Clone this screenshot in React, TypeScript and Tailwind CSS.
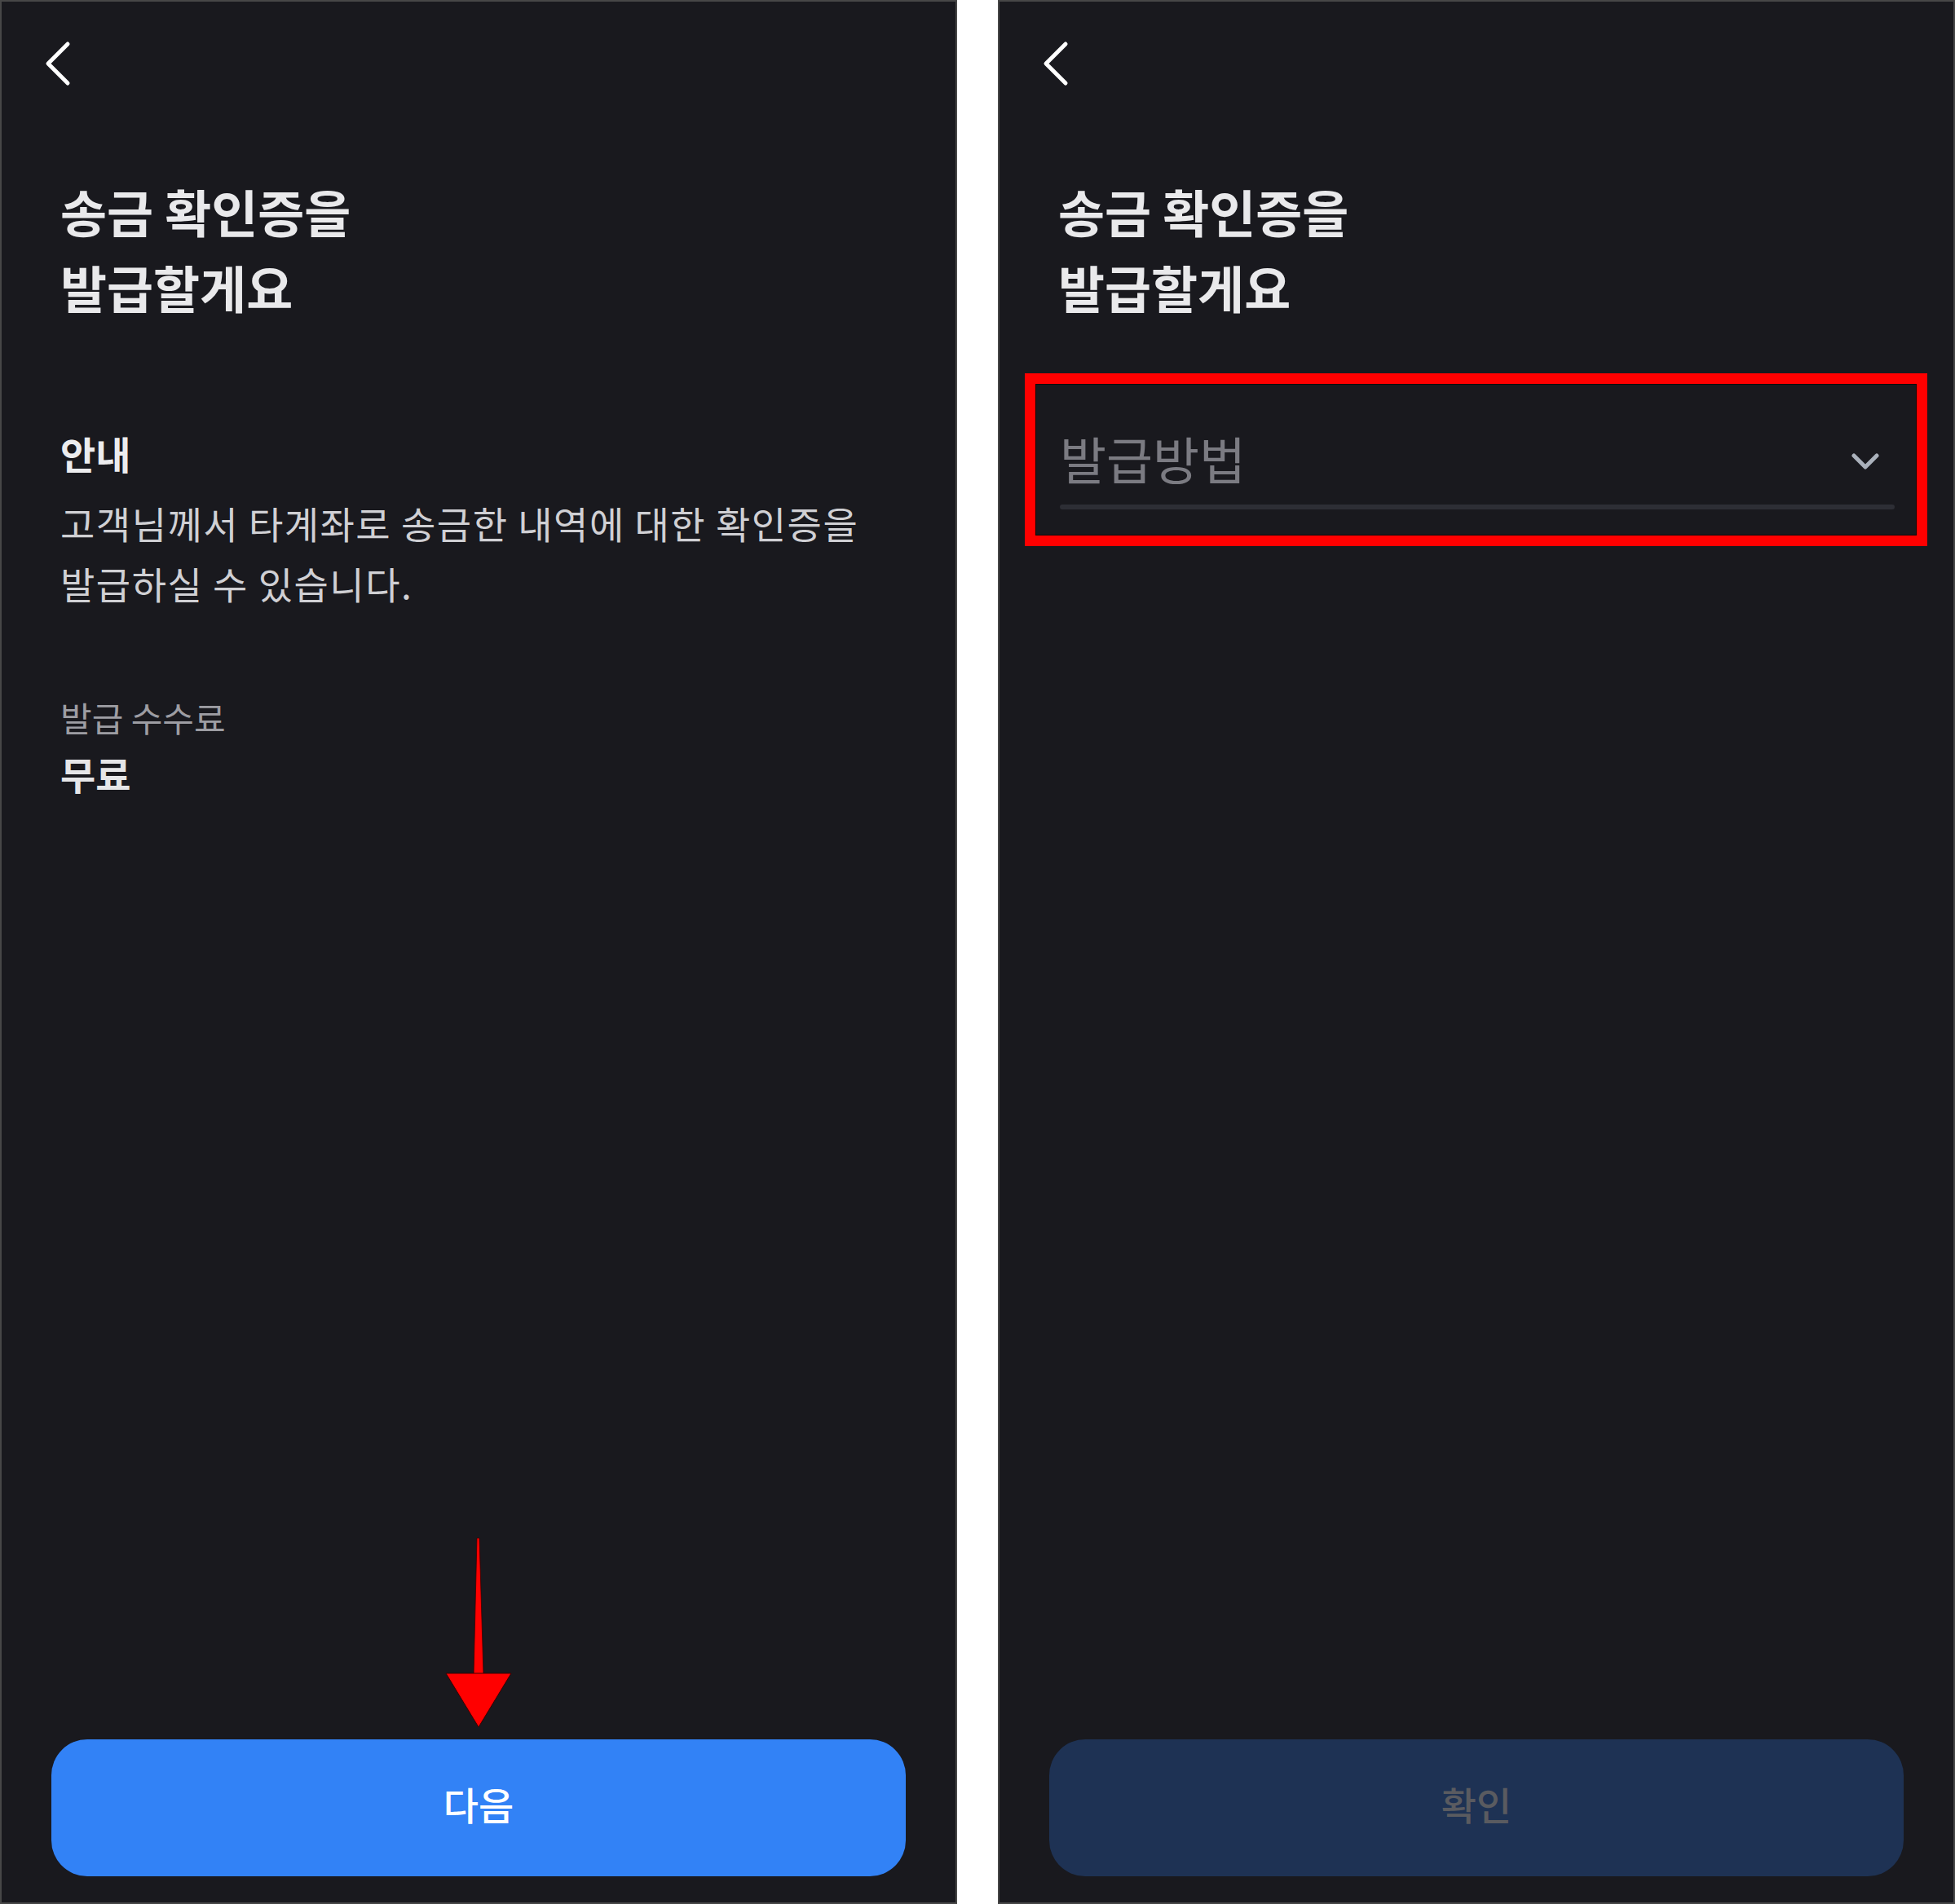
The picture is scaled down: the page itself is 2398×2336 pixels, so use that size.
import React from 'react';

const FONT = "font-['Noto_Sans_CJK_KR','Noto_Sans',sans-serif]";

/** 뒤로가기 화살표 */
function BackChevron() {
  return (
    <div className="pt-[48px] pl-[53px]">
      <svg width="32" height="56" viewBox="0 0 32 56" fill="none">
        <polyline
          points="28,4 4,28 28,52"
          stroke="#ffffff"
          strokeWidth="5"
          strokeLinecap="round"
          strokeLinejoin="round"
        />
      </svg>
    </div>
  );
}

function Title() {
  return (
    <h1 className="mt-[107px] px-[72px] text-[62px] leading-[93px] font-bold text-[#e9e9eb]">
      송금 확인증을
      <br />
      발급할게요
    </h1>
  );
}

/** 왼쪽 화면: 안내 + 다음 버튼 */
function IntroScreen() {
  return (
    <div className="relative flex h-full w-[1174px] shrink-0 flex-col border-2 border-[#474747] bg-[#19191e]">
      <BackChevron />
      <Title />

      <div className="px-[72px]">
        <p className="mt-[125px] text-[47px] leading-[64px] font-bold text-[#ececee]">안내</p>
        <p className="mt-[16px] text-[46px] leading-[74px] tracking-[1.5px] text-[#d0d0d4]">
          고객님께서 타계좌로 송금한 내역에 대한 확인증을
          <br />
          발급하실 수 있습니다.
        </p>

        <p className="mt-[100px] text-[42px] leading-[56px] text-[#9d9da3]">발급 수수료</p>
        <p className="mt-[11px] text-[47px] leading-[60px] font-bold text-[#e6e6e8]">무료</p>
      </div>

      <div className="flex-1" />

      <button className="mx-[61px] mb-[32px] flex h-[168px] items-center justify-center rounded-[44px] bg-[#3282f6] pb-[10px] text-[47px] font-medium text-white">
        다음
      </button>

      {/* 주석용 빨간 화살표 */}
      <svg
        className="absolute left-[535px] top-[1880px]"
        width="100"
        height="245"
        viewBox="0 0 100 245"
      >
        <polygon points="48,5 51,5 56,172 44,172" fill="#ff0000" stroke="#3a0000" strokeWidth="0.8" />
        <polygon points="10,171 90,171 50,237" fill="#ff0000" stroke="#3a0000" strokeWidth="1" />
      </svg>
    </div>
  );
}

/** 오른쪽 화면: 발급방법 선택 */
function MethodScreen() {
  return (
    <div className="relative flex h-full w-[1174px] shrink-0 flex-col border-2 border-[#474747] bg-[#19191e]">
      <BackChevron />
      <Title />

      <div className="mt-[123px] ml-[74px] mr-[72px]">
        <div className="flex items-center justify-between pr-[18px]">
          <span className="text-[62px] leading-[80px] text-[#7b7b82]">발급방법</span>
          <svg className="mt-[10px]" width="36" height="24" viewBox="0 0 36 24" fill="none">
            <polyline
              points="4,4 18,18 32,4"
              stroke="#aab1bb"
              strokeWidth="5"
              strokeLinecap="round"
              strokeLinejoin="round"
            />
          </svg>
        </div>
        <div className="mt-[17px] h-[6px] rounded-full bg-[#2d2e35]" />
      </div>

      <div className="flex-1" />

      <button className="mx-[61px] mb-[32px] flex h-[168px] items-center justify-center rounded-[44px] bg-[#1e3254] pb-[10px] text-[47px] font-medium text-[#5a5b60]">
        확인
      </button>

      {/* 주석용 빨간 박스 */}
      <div className="absolute left-[31px] top-[456px] h-[212px] w-[1107px] border-[13px] border-[#ff0000] shadow-[inset_0_0_0_1px_#0a0a0a]" />
    </div>
  );
}

export default function App() {
  return (
    <div className={`flex h-[2336px] w-[2398px] gap-[50px] bg-white ${FONT}`}>
      <IntroScreen />
      <MethodScreen />
    </div>
  );
}
